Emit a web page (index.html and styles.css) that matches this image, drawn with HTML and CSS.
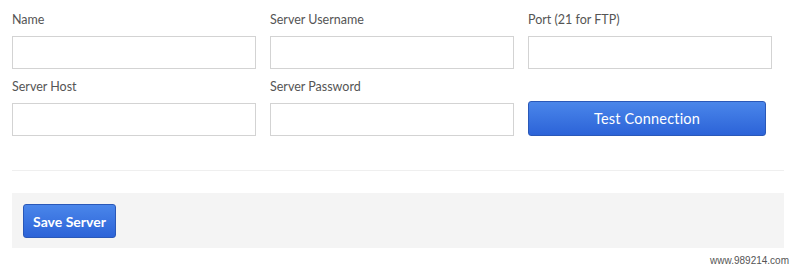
FILE: index.html
```html
<!DOCTYPE html>
<html>
<head>
<meta charset="utf-8">
<link rel="stylesheet" href="styles.css">
</head>
<body>
<div class="page">
  <div class="grid">
    <div class="field">
      <label class="label">Name</label>
      <input class="input" type="text">
    </div>
    <div class="field">
      <label class="label">Server Username</label>
      <input class="input" type="text">
    </div>
    <div class="field">
      <label class="label">Port (21 for FTP)</label>
      <input class="input" type="text">
    </div>
    <div class="field">
      <label class="label">Server Host</label>
      <input class="input" type="text">
    </div>
    <div class="field">
      <label class="label">Server Password</label>
      <input class="input" type="password">
    </div>
    <div class="field field-end">
      <button class="btn btn-test" type="button">Test Connection</button>
    </div>
  </div>
  <div class="sep"></div>
  <div class="footer">
    <button class="btn btn-save" type="button">Save Server</button>
  </div>
  <div class="watermark">www.989214.com</div>
</div>
</body>
</html>
```

FILE: styles.css
```css
html, body {
  margin: 0;
  padding: 0;
  background: #fff;
}
.page {
  padding: 12px 16px 0 12px;
  font-family: Lato, "Open Sans", sans-serif;
}
.grid {
  display: grid;
  grid-template-columns: 244px 244px 244px;
  column-gap: 14px;
  row-gap: 10px;
}
.field {
  display: flex;
  flex-direction: column;
}
.field-end {
  justify-content: flex-end;
}
.label {
  font-size: 12.5px;
  line-height: 16px;
  color: #555;
  margin-bottom: 8px;
}
.input {
  box-sizing: border-box;
  width: 244px;
  height: 33px;
  border: 1px solid #d3d3d3;
  border-radius: 0;
  background: #fff;
  margin: 0;
  padding: 0 8px;
  outline: none;
}
.btn {
  box-sizing: border-box;
  font-family: Lato, "Open Sans", sans-serif;
  color: #fff;
  border: 1px solid #2a58b8;
  border-radius: 3px;
  background: linear-gradient(#4a86ea, #2c63d8);
  cursor: pointer;
  padding: 0;
  margin: 0;
}
.btn-test {
  width: 238px;
  height: 35px;
  font-size: 14.5px;
  font-weight: 400;
  letter-spacing: 0.2px;
}
.sep {
  height: 1px;
  background: #efefef;
  margin-top: 34px;
}
.footer {
  margin-top: 22px;
  background: #f4f4f4;
  height: 55px;
  padding: 11px;
  box-sizing: border-box;
}
.btn-save {
  width: 93px;
  height: 34px;
  font-size: 14px;
  font-weight: 700;
}
.watermark {
  text-align: right;
  font-family: "Liberation Sans", Arial, sans-serif;
  font-size: 10px;
  color: #555;
  margin-right: -5px;
  margin-top: 7px;
}
```
